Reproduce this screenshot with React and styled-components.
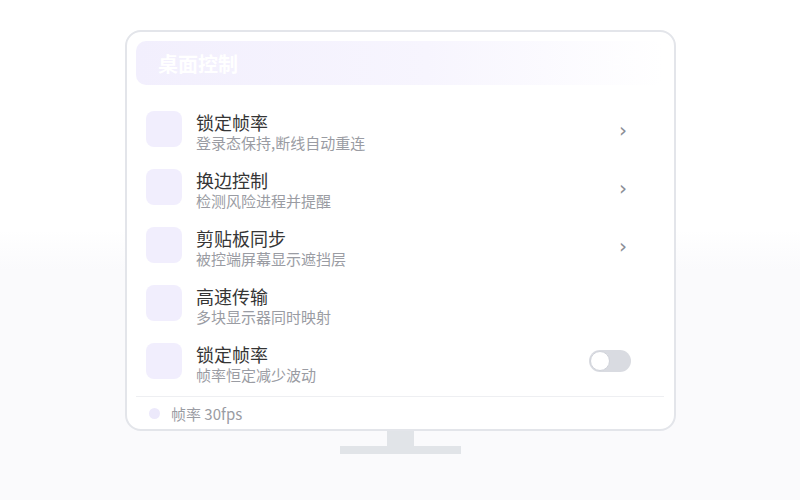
import React from "react";
import styled, { createGlobalStyle } from "styled-components";

const GlobalStyle = createGlobalStyle`
  html, body {
    margin: 0;
    padding: 0;
  }
  body {
    font-family: "Noto Sans CJK SC", "Noto Sans", sans-serif;
    background: linear-gradient(to bottom, #ffffff 0%, #ffffff 46%, #fafafc 54%, #fafafc 100%);
    width: 800px;
    height: 500px;
    overflow: hidden;
  }
`;

const rows = [
    { title: "锁定帧率", desc: "登录态保持,断线自动重连", action: "arrow" },
    { title: "换边控制", desc: "检测风险进程并提醒", action: "arrow" },
    { title: "剪贴板同步", desc: "被控端屏幕显示遮挡层", action: "arrow" },
    { title: "高速传输", desc: "多块显示器同时映射", action: "none" },
    { title: "锁定帧率", desc: "帧率恒定减少波动", action: "toggle" },
];

export default function App() {
    return (
        <Page>
            <GlobalStyle />
            <Monitor>
                <Screen>
                    <Header>
                        <HeaderTitle>桌面控制</HeaderTitle>
                        <HeaderExtra>设置</HeaderExtra>
                    </Header>

                    <List>
                        {rows.map((row, index) => (
                            <Row key={index}>
                                <IconBox />
                                <RowText>
                                    <RowTitle>{row.title}</RowTitle>
                                    <RowDesc>{row.desc}</RowDesc>
                                </RowText>
                                {row.action === "arrow" && <Chevron>›</Chevron>}
                                {row.action === "toggle" && (
                                    <Toggle>
                                        <Knob />
                                    </Toggle>
                                )}
                            </Row>
                        ))}
                    </List>

                    <Footer>
                        <Dot />
                        <FooterText>帧率 30fps</FooterText>
                    </Footer>
                </Screen>
                <Neck />
                <Base />
            </Monitor>
        </Page>
    );
}

const Page = styled.div`
    width: 800px;
    height: 500px;
    box-sizing: border-box;
    padding-top: 30px;
    display: flex;
    justify-content: center;
`;

const Monitor = styled.div`
    display: flex;
    flex-direction: column;
    align-items: center;
    margin-left: 1px;
`;

const Screen = styled.div`
    width: 551px;
    height: 401px;
    box-sizing: border-box;
    border: 2px solid #e3e5ea;
    border-radius: 16px;
    background: #ffffff;
    padding: 9px 10px 0 9px;
    display: flex;
    flex-direction: column;
`;

const Header = styled.div`
    height: 45px;
    border-radius: 10px;
    background: linear-gradient(to right, #f2effd 0%, #f7f5fe 55%, #ffffff 100%);
    display: flex;
    align-items: center;
    justify-content: space-between;
    padding: 0 22px;
`;

const HeaderTitle = styled.div`
    color: #ffffff;
    font-size: 20px;
    font-weight: 700;
`;

const HeaderExtra = styled.div`
    color: #ffffff;
    font-size: 18px;
    opacity: 0.8;
`;

const List = styled.div`
    display: flex;
    flex-direction: column;
    padding-top: 15px;
`;

const Row = styled.div`
    height: 58px;
    display: flex;
    align-items: flex-start;
    padding: 11px 0 0 10px;
    box-sizing: border-box;
`;

const IconBox = styled.div`
    width: 36px;
    height: 36px;
    border-radius: 8px;
    background: #f1eefd;
    flex-shrink: 0;
`;

const RowText = styled.div`
    flex: 1;
    margin-left: 14px;
    margin-top: 2px;
    display: flex;
    flex-direction: column;
    gap: 3px;
`;

const RowTitle = styled.div`
    font-size: 18px;
    line-height: 19px;
    color: #353535;
`;

const RowDesc = styled.div`
    font-size: 15px;
    line-height: 16px;
    color: #9a9ca3;
`;

const Chevron = styled.div`
    width: 12px;
    margin-right: 33px;
    margin-top: 7px;
    font-family: "DejaVu Sans", sans-serif;
    font-size: 20px;
    line-height: 24px;
    color: #8b8e96;
`;

const Toggle = styled.div`
    width: 42px;
    height: 22px;
    box-sizing: border-box;
    border-radius: 11px;
    background: #d9dbe1;
    margin-right: 33px;
    margin-top: 7px;
    position: relative;
`;

const Knob = styled.div`
    position: absolute;
    top: 1px;
    left: 1px;
    width: 20px;
    height: 20px;
    box-sizing: border-box;
    border-radius: 50%;
    background: #ffffff;
    border: 1px solid #d0d3da;
`;

const Footer = styled.div`
    margin-top: 6px;
    border-top: 1px solid #eeeff2;
    height: 32px;
    display: flex;
    align-items: center;
    padding-left: 13px;
`;

const Dot = styled.div`
    width: 11px;
    height: 11px;
    border-radius: 50%;
    background: #ece9fb;
`;

const FooterText = styled.div`
    margin-left: 11px;
    font-size: 15px;
    color: #9a9ca3;
`;

const Neck = styled.div`
    width: 27px;
    height: 15px;
    background: #e1e4e8;
`;

const Base = styled.div`
    width: 121px;
    height: 8px;
    background: #e1e4e8;
`;
